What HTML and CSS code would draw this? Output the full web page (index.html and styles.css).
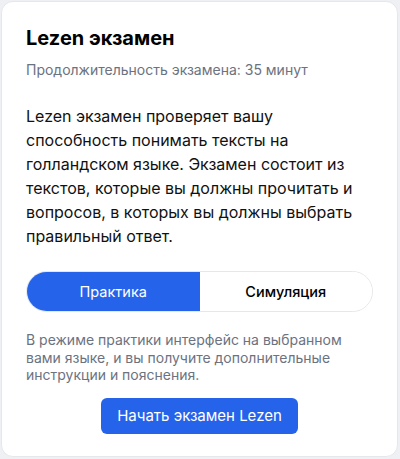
FILE: index.html
```html
<!DOCTYPE html>
<html lang="ru">
<head>
<meta charset="utf-8">
<link rel="stylesheet" href="styles.css">
</head>
<body>
<div class="card">
  <h1 class="title">Lezen экзамен</h1>
  <p class="duration">Продолжительность экзамена: 35 минут</p>
  <p class="desc">Lezen экзамен проверяет вашу способность понимать тексты на голландском языке. Экзамен состоит из текстов, которые вы должны прочитать и вопросов, в которых вы должны выбрать правильный ответ.</p>
  <div class="toggle">
    <button class="opt active">Практика</button>
    <button class="opt">Симуляция</button>
  </div>
  <p class="note">В режиме практики интерфейс на выбранном вами языке, и вы получите дополнительные инструкции и пояснения.</p>
  <div class="actions">
    <button class="start">Начать экзамен Lezen</button>
  </div>
</div>
</body>
</html>
```
FILE: styles.css
```css
html, body {
  margin: 0;
  padding: 0;
}
body {
  background: #eef0f4;
  font-family: Inter, "Noto Sans", sans-serif;
  padding: 1px 2px 2px 1px;
  height: 459px;
  box-sizing: border-box;
}
.card {
  background: #fff;
  border: 1px solid #e5e7eb;
  border-radius: 12px;
  padding: 22px 24px 24px 24px;
  height: 100%;
  box-sizing: border-box;
}
.title {
  margin: 0;
  font-size: 20px;
  line-height: 28px;
  font-weight: 700;
  color: #000;
}
.duration {
  margin: 8px 0 0;
  font-size: 14px;
  line-height: 20px;
  color: #6b7280;
}
.desc {
  margin: 24px 0 0;
  font-size: 16px;
  line-height: 24px;
  color: #111;
}
.toggle {
  margin-top: 23px;
  display: flex;
  border: 1px solid #e5e7eb;
  border-radius: 999px;
  overflow: hidden;
  height: 41px;
  box-sizing: border-box;
}
.opt {
  flex: 1;
  border: 0;
  background: #fff;
  font-family: inherit;
  font-size: 14.5px;
  font-weight: 500;
  color: #000;
  padding: 0;
}
.opt.active {
  background: #2563eb;
  color: #fff;
  font-weight: 400;
}
.note {
  margin: 19px 0 0;
  font-size: 14px;
  line-height: 17.5px;
  color: #6b7280;
}
.actions {
  display: flex;
  justify-content: center;
  margin-top: 14px;
}
.start {
  background: #2563eb;
  color: #fff;
  border: 0;
  border-radius: 6px;
  font-family: inherit;
  font-size: 15px;
  padding: 0 16px;
  height: 36px;
}
```
